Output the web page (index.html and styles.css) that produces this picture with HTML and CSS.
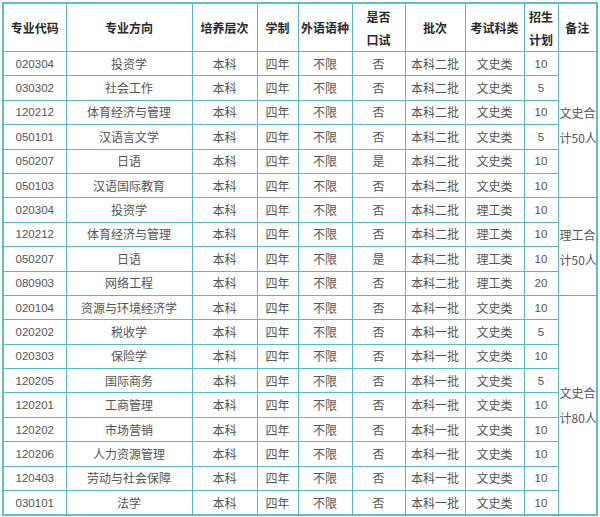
FILE: index.html
```html
<!DOCTYPE html>
<html lang="zh-CN">
<head>
<meta charset="utf-8">
<title>招生计划</title>
<link rel="stylesheet" href="styles.css">
</head>
<body>
<table class="plan">
<colgroup>
<col class="c1"><col class="c2"><col class="c3"><col class="c4"><col class="c5"><col class="c6"><col class="c7"><col class="c8"><col class="c9"><col class="c10">
</colgroup>
<thead>
<tr class="head">
<th>专业代码</th><th>专业方向</th><th>培养层次</th><th>学制</th><th>外语语种</th><th>是否<br>口试</th><th>批次</th><th>考试科类</th><th>招生<br>计划</th><th>备注</th>
</tr>
</thead>
<tbody>
<tr><td class="num">020304</td><td>投资学</td><td>本科</td><td>四年</td><td>不限</td><td>否</td><td>本科二批</td><td>文史类</td><td class="num">10</td><td class="note" rowspan="6">文史合<br>计50人</td></tr>
<tr><td class="num">030302</td><td>社会工作</td><td>本科</td><td>四年</td><td>不限</td><td>否</td><td>本科二批</td><td>文史类</td><td class="num">5</td></tr>
<tr><td class="num">120212</td><td>体育经济与管理</td><td>本科</td><td>四年</td><td>不限</td><td>否</td><td>本科二批</td><td>文史类</td><td class="num">10</td></tr>
<tr><td class="num">050101</td><td>汉语言文学</td><td>本科</td><td>四年</td><td>不限</td><td>否</td><td>本科二批</td><td>文史类</td><td class="num">5</td></tr>
<tr><td class="num">050207</td><td>日语</td><td>本科</td><td>四年</td><td>不限</td><td>是</td><td>本科二批</td><td>文史类</td><td class="num">10</td></tr>
<tr><td class="num">050103</td><td>汉语国际教育</td><td>本科</td><td>四年</td><td>不限</td><td>否</td><td>本科二批</td><td>文史类</td><td class="num">10</td></tr>
<tr><td class="num">020304</td><td>投资学</td><td>本科</td><td>四年</td><td>不限</td><td>否</td><td>本科二批</td><td>理工类</td><td class="num">10</td><td class="note" rowspan="4">理工合<br>计50人</td></tr>
<tr><td class="num">120212</td><td>体育经济与管理</td><td>本科</td><td>四年</td><td>不限</td><td>否</td><td>本科二批</td><td>理工类</td><td class="num">10</td></tr>
<tr><td class="num">050207</td><td>日语</td><td>本科</td><td>四年</td><td>不限</td><td>是</td><td>本科二批</td><td>理工类</td><td class="num">10</td></tr>
<tr><td class="num">080903</td><td>网络工程</td><td>本科</td><td>四年</td><td>不限</td><td>否</td><td>本科二批</td><td>理工类</td><td class="num">20</td></tr>
<tr><td class="num">020104</td><td>资源与环境经济学</td><td>本科</td><td>四年</td><td>不限</td><td>否</td><td>本科一批</td><td>文史类</td><td class="num">10</td><td class="note" rowspan="9">文史合<br>计80人</td></tr>
<tr><td class="num">020202</td><td>税收学</td><td>本科</td><td>四年</td><td>不限</td><td>否</td><td>本科一批</td><td>文史类</td><td class="num">5</td></tr>
<tr><td class="num">020303</td><td>保险学</td><td>本科</td><td>四年</td><td>不限</td><td>否</td><td>本科一批</td><td>文史类</td><td class="num">10</td></tr>
<tr><td class="num">120205</td><td>国际商务</td><td>本科</td><td>四年</td><td>不限</td><td>否</td><td>本科一批</td><td>文史类</td><td class="num">5</td></tr>
<tr><td class="num">120201</td><td>工商管理</td><td>本科</td><td>四年</td><td>不限</td><td>否</td><td>本科一批</td><td>文史类</td><td class="num">10</td></tr>
<tr><td class="num">120202</td><td>市场营销</td><td>本科</td><td>四年</td><td>不限</td><td>否</td><td>本科一批</td><td>文史类</td><td class="num">10</td></tr>
<tr><td class="num">120206</td><td>人力资源管理</td><td>本科</td><td>四年</td><td>不限</td><td>否</td><td>本科一批</td><td>文史类</td><td class="num">10</td></tr>
<tr><td class="num">120403</td><td>劳动与社会保障</td><td>本科</td><td>四年</td><td>不限</td><td>否</td><td>本科一批</td><td>文史类</td><td class="num">10</td></tr>
<tr><td class="num">030101</td><td>法学</td><td>本科</td><td>四年</td><td>不限</td><td>否</td><td>本科一批</td><td>文史类</td><td class="num">10</td></tr>
</tbody>
</table>
</body>
</html>
```

FILE: styles.css
```css
html, body {
  margin: 0;
  padding: 0;
  background: #ffffff;
}
body {
  padding: 2px 2px 0 2px;
  font-family: "Noto Sans CJK SC", "Noto Sans", sans-serif;
  font-size: 12px;
  color: #555555;
}
.plan {
  table-layout: fixed;
  border-collapse: collapse;
  width: 596px;
  border: 2px solid #62bccb;
}
.c1 { width: 63px; }
.c2 { width: 126px; }
.c3 { width: 65px; }
.c4 { width: 41px; }
.c5 { width: 54px; }
.c6 { width: 53px; }
.c7 { width: 60px; }
.c8 { width: 59px; }
.c9 { width: 34px; }
.c10 { width: 39px; }
.plan th,
.plan td {
  border: 1px solid #5cb7c7;
  padding: 0;
  text-align: center;
  vertical-align: middle;
  white-space: nowrap;
  overflow: hidden;
}
.head th {
  height: 47px;
  font-weight: bold;
  color: #2a2a2a;
  line-height: 23px;
}
.plan tbody td {
  height: 23.4px;
  line-height: 16px;
}
.plan td.num {
  font-family: "Liberation Sans", "Noto Sans", sans-serif;
  font-size: 11.5px;
}
.plan td.note {
  text-align: left;
  padding-left: 1px;
  line-height: 25px;
}
```
